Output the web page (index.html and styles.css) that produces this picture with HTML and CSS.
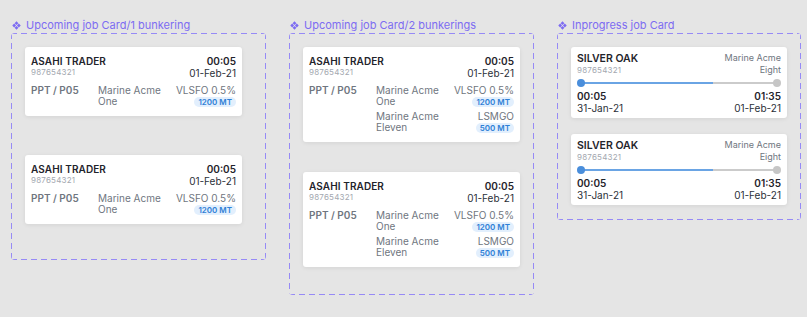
FILE: index.html
```html
<!DOCTYPE html>
<html lang="en">
<head>
  <meta charset="UTF-8" />
  <title>Job Cards</title>
  <link rel="stylesheet" href="styles.css">
</head>
<body>

<div class="board">

  <div class="variant v1">
    <div class="label">
      <svg class="comp-icon" viewBox="0 0 10 10"><path d="M5 0.3L7.1 2.4L5 4.5L2.9 2.4Z M2.4 2.9L4.5 5L2.4 7.1L0.3 5Z M7.6 2.9L9.7 5L7.6 7.1L5.5 5Z M5 5.5L7.1 7.6L5 9.7L2.9 7.6Z"/></svg>
      Upcoming job Card/1 bunkering
    </div>
    <div class="frame">
      <div class="job-card">
        <div class="job-head">
          <div><div class="vessel">ASAHI TRADER</div><div class="imo">987654321</div></div>
          <div class="when"><div class="time">00:05</div><div class="date">01-Feb-21</div></div>
        </div>
        <div class="job-body">
          <div class="port">PPT / P05</div>
          <div class="lines">
            <div class="line">
              <div class="supplier">Marine Acme<br>One</div>
              <div class="fuel">VLSFO 0.5%<br><span class="qty">1200 MT</span></div>
            </div>
          </div>
        </div>
      </div>
      <div class="job-card">
        <div class="job-head">
          <div><div class="vessel">ASAHI TRADER</div><div class="imo">987654321</div></div>
          <div class="when"><div class="time">00:05</div><div class="date">01-Feb-21</div></div>
        </div>
        <div class="job-body">
          <div class="port">PPT / P05</div>
          <div class="lines">
            <div class="line">
              <div class="supplier">Marine Acme<br>One</div>
              <div class="fuel">VLSFO 0.5%<br><span class="qty">1200 MT</span></div>
            </div>
          </div>
        </div>
      </div>
    </div>
  </div>

  <div class="variant v2">
    <div class="label">
      <svg class="comp-icon" viewBox="0 0 10 10"><path d="M5 0.3L7.1 2.4L5 4.5L2.9 2.4Z M2.4 2.9L4.5 5L2.4 7.1L0.3 5Z M7.6 2.9L9.7 5L7.6 7.1L5.5 5Z M5 5.5L7.1 7.6L5 9.7L2.9 7.6Z"/></svg>
      Upcoming job Card/2 bunkerings
    </div>
    <div class="frame">
      <div class="job-card">
        <div class="job-head">
          <div><div class="vessel">ASAHI TRADER</div><div class="imo">987654321</div></div>
          <div class="when"><div class="time">00:05</div><div class="date">01-Feb-21</div></div>
        </div>
        <div class="job-body">
          <div class="port">PPT / P05</div>
          <div class="lines">
            <div class="line">
              <div class="supplier">Marine Acme<br>One</div>
              <div class="fuel">VLSFO 0.5%<br><span class="qty">1200 MT</span></div>
            </div>
            <div class="line">
              <div class="supplier">Marine Acme<br>Eleven</div>
              <div class="fuel">LSMGO<br><span class="qty">500 MT</span></div>
            </div>
          </div>
        </div>
      </div>
      <div class="job-card">
        <div class="job-head">
          <div><div class="vessel">ASAHI TRADER</div><div class="imo">987654321</div></div>
          <div class="when"><div class="time">00:05</div><div class="date">01-Feb-21</div></div>
        </div>
        <div class="job-body">
          <div class="port">PPT / P05</div>
          <div class="lines">
            <div class="line">
              <div class="supplier">Marine Acme<br>One</div>
              <div class="fuel">VLSFO 0.5%<br><span class="qty">1200 MT</span></div>
            </div>
            <div class="line">
              <div class="supplier">Marine Acme<br>Eleven</div>
              <div class="fuel">LSMGO<br><span class="qty">500 MT</span></div>
            </div>
          </div>
        </div>
      </div>
    </div>
  </div>

  <div class="variant v3">
    <div class="label">
      <svg class="comp-icon" viewBox="0 0 10 10"><path d="M5 0.3L7.1 2.4L5 4.5L2.9 2.4Z M2.4 2.9L4.5 5L2.4 7.1L0.3 5Z M7.6 2.9L9.7 5L7.6 7.1L5.5 5Z M5 5.5L7.1 7.6L5 9.7L2.9 7.6Z"/></svg>
      Inprogress job Card
    </div>
    <div class="frame">
      <div class="run-card">
        <div class="run-head">
          <div><div class="vessel big">SILVER OAK</div><div class="imo">987654321</div></div>
          <div class="run-supplier">Marine Acme<br>Eight</div>
        </div>
        <div class="track">
          <span class="dot start"></span>
          <span class="bar"><span class="fill" style="width: 68%"></span></span>
          <span class="dot end"></span>
        </div>
        <div class="run-times">
          <div><div class="time">00:05</div><div class="date">31-Jan-21</div></div>
          <div class="when"><div class="time">01:35</div><div class="date">01-Feb-21</div></div>
        </div>
      </div>
      <div class="run-card">
        <div class="run-head">
          <div><div class="vessel big">SILVER OAK</div><div class="imo">987654321</div></div>
          <div class="run-supplier">Marine Acme<br>Eight</div>
        </div>
        <div class="track">
          <span class="dot start"></span>
          <span class="bar"><span class="fill" style="width: 68%"></span></span>
          <span class="dot end"></span>
        </div>
        <div class="run-times">
          <div><div class="time">00:05</div><div class="date">31-Jan-21</div></div>
          <div class="when"><div class="time">01:35</div><div class="date">01-Feb-21</div></div>
        </div>
      </div>
    </div>
  </div>

</div>

</body>
</html>
```

FILE: styles.css
```css
:root {
  --canvas: #e5e5e5;
  --purple: #7d6cf2;
  --dash: #968af6;
  --ink: #1f242b;
  --muted: #6f7680;
  --faint: #a3a8b0;
  --blue: #2f80d6;
  --blue-bg: #e2effd;
}
body {
  margin: 0;
  background: var(--canvas);
  font-family: Inter, "Noto Sans", sans-serif;
  color: var(--ink);
}
.board {
  display: flex;
  align-items: flex-start;
  gap: 23px;
  padding: 18px 0 0 11px;
}
.variant { flex: none; }
.v1 { width: 255px; }
.v2 { width: 245px; }
.v3 { width: 244px; }

.label {
  display: flex;
  align-items: center;
  gap: 5px;
  height: 14px;
  margin: 0 0 1px 1px;
  font-size: 11px;
  color: var(--purple);
  white-space: nowrap;
}
.comp-icon {
  width: 9px;
  height: 9px;
  fill: var(--purple);
}

/* dashed outline drawn with gradients so the dashes are long like the design tool's */
.frame {
  box-sizing: border-box;
  display: flex;
  flex-direction: column;
  padding: 14px;
  border-radius: 4px;
  background:
    repeating-linear-gradient(90deg, var(--dash) 0 6px, transparent 6px 10px) top left / 100% 1px no-repeat,
    repeating-linear-gradient(90deg, var(--dash) 0 6px, transparent 6px 10px) bottom left / 100% 1px no-repeat,
    repeating-linear-gradient(180deg, var(--dash) 0 6px, transparent 6px 10px) top left / 1px 100% no-repeat,
    repeating-linear-gradient(180deg, var(--dash) 0 6px, transparent 6px 10px) top right / 1px 100% no-repeat;
}
.v1 .frame { height: 227px; gap: 39px; }
.v2 .frame { height: 262px; gap: 30px; }
.v3 .frame { height: 187px; gap: 16px; }

.job-card, .run-card {
  box-sizing: border-box;
  width: 217px;
  background: #fff;
  border-radius: 3px;
  box-shadow: 0 1px 4px rgba(0, 0, 0, 0.08);
}
.job-card { padding: 8px 6px 9px; }
.run-card { width: 216px; padding: 5px 6px 4px; }

.job-head, .run-head, .run-times {
  display: flex;
  justify-content: space-between;
  align-items: flex-start;
}
.vessel {
  font-size: 10px;
  line-height: 12px;
  font-weight: 600;
  letter-spacing: 0.1px;
}
.vessel.big {
  font-size: 10.5px;
  line-height: 13px;
  letter-spacing: 0;
}
.imo {
  font-size: 8px;
  line-height: 10px;
  color: var(--faint);
  letter-spacing: 0.2px;
}
.when { text-align: right; }
.time {
  font-size: 10px;
  line-height: 12px;
  font-weight: 600;
}
.date {
  font-size: 10px;
  line-height: 12px;
  color: #2b3038;
}

.job-body {
  display: flex;
  margin-top: 6px;
  font-size: 10px;
  line-height: 11px;
  color: var(--muted);
}
.port {
  width: 67px;
  flex: none;
  font-weight: 600;
}
.lines {
  flex: 1;
  display: flex;
  flex-direction: column;
  gap: 4px;
}
.line {
  display: flex;
  justify-content: space-between;
}
.fuel { text-align: right; }
.qty {
  display: inline-block;
  vertical-align: top;
  margin-top: 1px;
  padding: 0 4px;
  border-radius: 5px;
  background: var(--blue-bg);
  color: var(--blue);
  font-size: 8px;
  line-height: 10px;
  font-weight: 600;
}

.run-supplier {
  text-align: right;
  font-size: 9px;
  line-height: 11.5px;
  color: var(--muted);
}
.track {
  display: flex;
  align-items: center;
  margin: 4px 0 3px;
}
.dot {
  width: 8px;
  height: 8px;
  border-radius: 50%;
  flex: none;
  position: relative;
}
.dot.start { background: #4a8edb; }
.dot.end { background: #c6c6c6; }
.bar {
  flex: 1;
  height: 2px;
  margin: 0 -1px;
  background: #cbcbcb;
}
.fill {
  display: block;
  height: 100%;
  background: #6aa4e4;
}
```
